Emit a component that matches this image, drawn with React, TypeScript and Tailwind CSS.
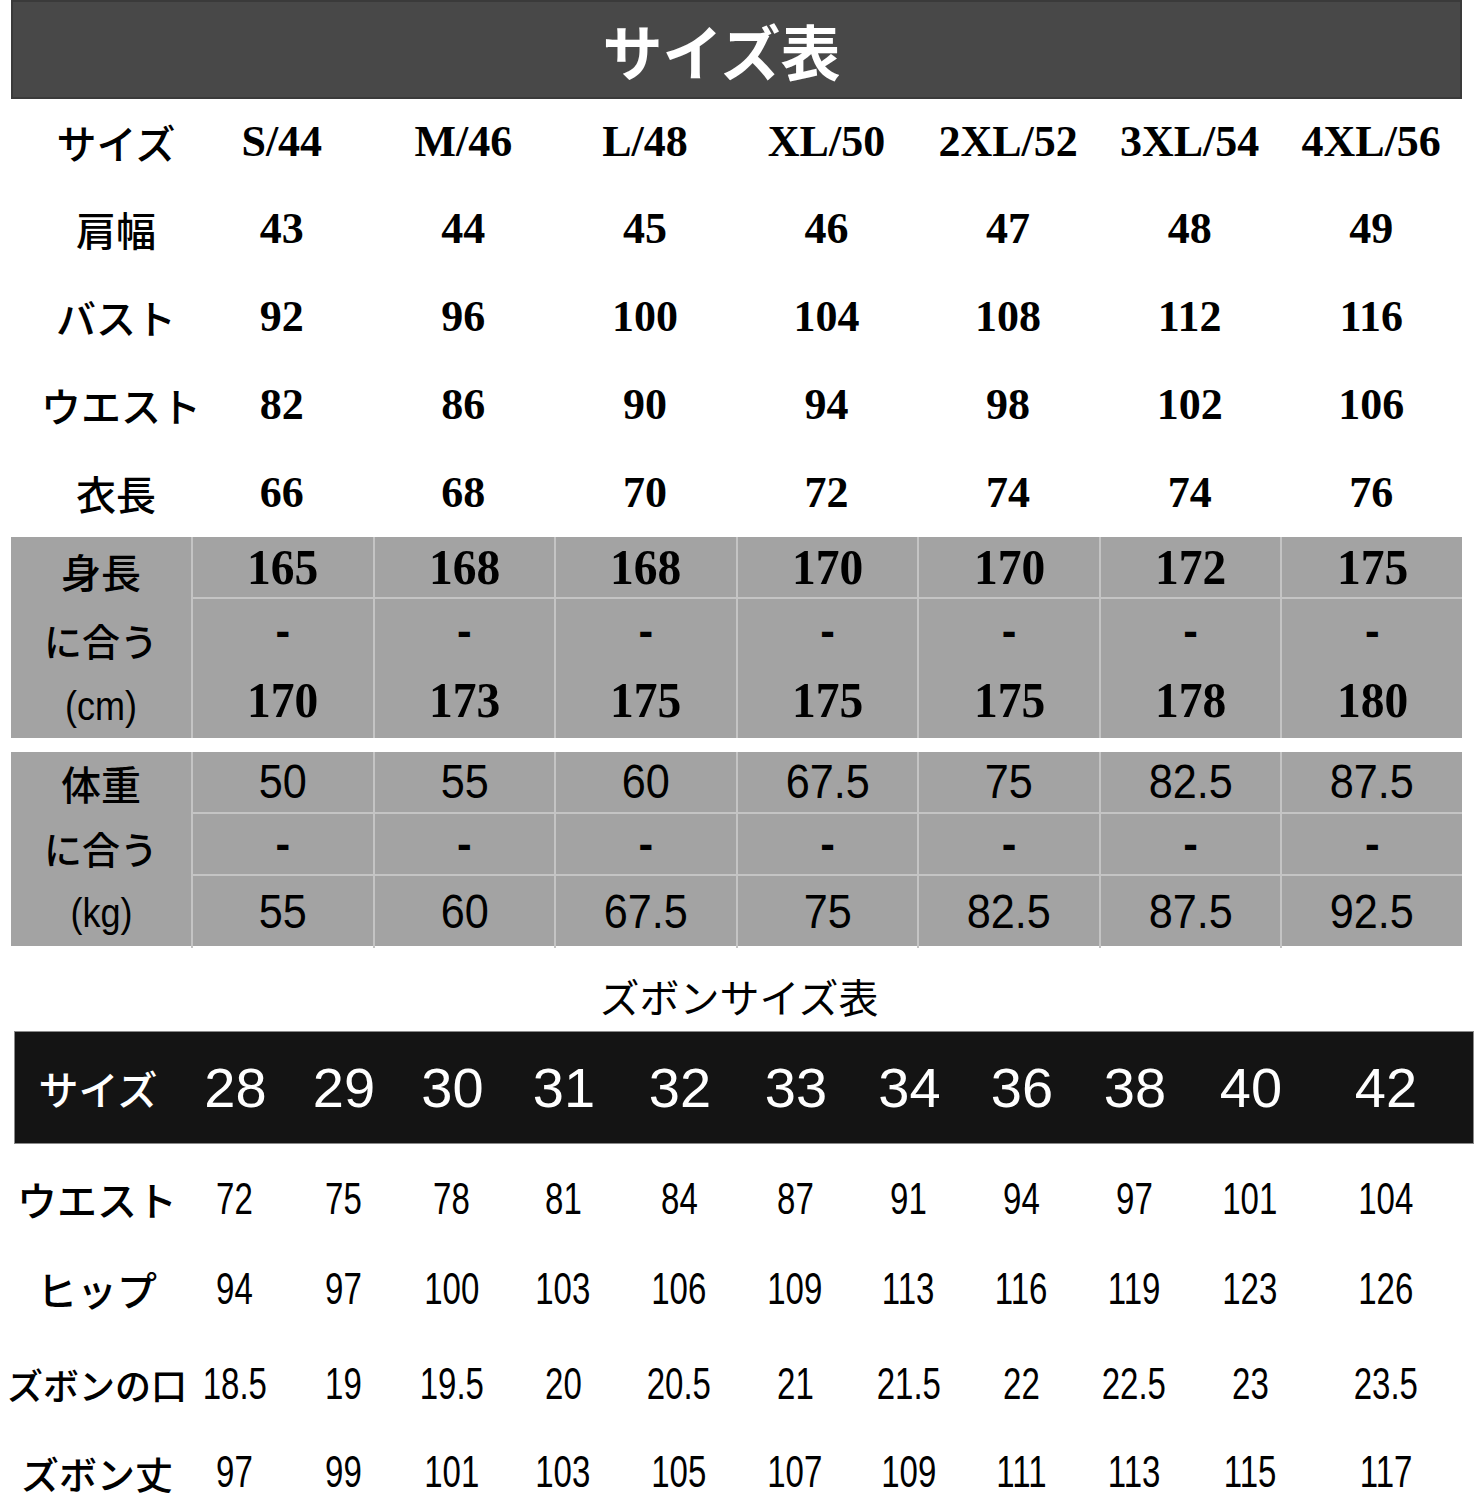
const jp = "font-['Noto_Sans_CJK_JP',sans-serif]";
const serif = "font-['Liberation_Serif','Noto_Sans_CJK_JP',serif]";
const sans = "font-['Liberation_Sans',sans-serif]";

const sizes = ['S/44', 'M/46', 'L/48', 'XL/50', '2XL/52', '3XL/54', '4XL/56'];

const topRows = [
  { label: '肩幅', values: ['43', '44', '45', '46', '47', '48', '49'] },
  { label: 'バスト', values: ['92', '96', '100', '104', '108', '112', '116'] },
  { label: 'ウエスト', values: ['82', '86', '90', '94', '98', '102', '106'] },
  { label: '衣長', values: ['66', '68', '70', '72', '74', '74', '76'] },
];

const height = [
  ['165', '170'],
  ['168', '173'],
  ['168', '175'],
  ['170', '175'],
  ['170', '175'],
  ['172', '178'],
  ['175', '180'],
];

const weight = [
  ['50', '55'],
  ['55', '60'],
  ['60', '67.5'],
  ['67.5', '75'],
  ['75', '82.5'],
  ['82.5', '87.5'],
  ['87.5', '92.5'],
];

const pantSizes = ['28', '29', '30', '31', '32', '33', '34', '36', '38', '40', '42'];

const pantRows = [
  { label: 'ウエスト', size: 'text-[40px]', h: 'mt-[10px] h-[90px]', values: ['72', '75', '78', '81', '84', '87', '91', '94', '97', '101', '104'] },
  { label: 'ヒップ', size: 'text-[40px]', h: 'h-[90px]', values: ['94', '97', '100', '103', '106', '109', '113', '116', '119', '123', '126'] },
  { label: 'ズボンの口', size: 'text-[36px]', h: 'h-[100px]', values: ['18.5', '19', '19.5', '20', '20.5', '21', '21.5', '22', '22.5', '23', '23.5'] },
  { label: 'ズボン丈', size: 'text-[38px]', h: 'h-[76px]', values: ['97', '99', '101', '103', '105', '107', '109', '111', '113', '115', '117'] },
];

const topGrid = 'grid grid-cols-[180px_repeat(7,1fr)]';
const pantGrid =
  'grid grid-cols-[166px_109px_108px_109px_114px_118px_114px_113px_112px_114px_118px_1fr] pr-[11px]';

function Dash() {
  return <span className={`${sans} text-[44px] font-bold`}>-</span>;
}

function TopTable() {
  return (
    <div className="ml-[11px] w-[1451px]">
      <div className="flex h-[99px] items-center justify-center border-2 border-[#3a3a3a] bg-[#484848] pr-[30px]">
        <h1 className={`${jp} text-[60px] font-bold text-white`}>サイズ表</h1>
      </div>

      <div className={`${topGrid} h-[86px] items-center`}>
        <div className={`${jp} pl-[30px] text-center text-[40px] font-medium text-black`}>サイズ</div>
        {sizes.map((s) => (
          <div key={s} className={`${serif} text-center text-[44px] font-bold text-black`}>
            {s}
          </div>
        ))}
      </div>

      {topRows.map((row) => (
        <div key={row.label} className={`${topGrid} h-[88px] items-center`}>
          <div className={`${jp} whitespace-nowrap pl-[30px] text-center text-[40px] font-medium text-black`}>
            {row.label}
          </div>
          {row.values.map((v, i) => (
            <div key={i} className={`${serif} text-center text-[44px] font-bold text-black`}>
              {v}
            </div>
          ))}
        </div>
      ))}

      {/* 身長 */}
      <div className={`${topGrid} h-[201px] bg-[#a3a3a3]`}>
        <div className={`${jp} flex flex-col items-center text-black`}>
          <div className="flex h-[68px] items-center text-[40px] font-medium">身長</div>
          <div className="flex h-[68px] items-center text-[38px] font-medium">に合う</div>
          <div className={`${sans} flex h-[65px] items-center text-[40px]`}>
            <span className="scale-x-90">(cm)</span>
          </div>
        </div>
        {height.map(([a, b], i) => (
          <div key={i} className={`${serif} flex flex-col border-l-2 border-[#c4c4c4] font-bold text-black`}>
            <div className="flex h-[62px] items-center justify-center border-b-2 border-[#c4c4c4] text-[50px]">
              <span className="scale-x-95">{a}</span>
            </div>
            <div className="flex h-[64px] items-center justify-center">
              <Dash />
            </div>
            <div className="flex flex-1 items-center justify-center text-[50px]">
              <span className="scale-x-95">{b}</span>
            </div>
          </div>
        ))}
      </div>

      <div className="h-[14px]" />

      {/* 体重 */}
      <div className={`${topGrid} h-[194px] bg-[#a3a3a3]`}>
        <div className={`${jp} flex flex-col items-center text-black`}>
          <div className="flex h-[62px] items-center text-[40px] font-medium">体重</div>
          <div className="flex h-[66px] items-center text-[38px] font-medium">に合う</div>
          <div className={`${sans} flex h-[66px] items-center text-[40px]`}>
            <span className="scale-x-90">(kg)</span>
          </div>
        </div>
        {weight.map(([a, b], i) => (
          <div key={i} className={`${sans} flex flex-col border-l-2 border-[#c4c4c4] text-black`}>
            <div className="flex h-[62px] items-center justify-center border-b-2 border-[#c4c4c4] text-[48px]">
              <span className="scale-x-90">{a}</span>
            </div>
            <div className="flex h-[62px] items-center justify-center border-b-2 border-[#c4c4c4]">
              <Dash />
            </div>
            <div className="flex flex-1 items-center justify-center text-[48px]">
              <span className="scale-x-90">{b}</span>
            </div>
          </div>
        ))}
      </div>
    </div>
  );
}

function PantsTable() {
  return (
    <div>
      <div className="flex h-[85px] items-center justify-center pt-[15px]">
        <h2 className={`${jp} text-[40px] text-black`}>ズボンサイズ表</h2>
      </div>

      <div className="ml-[14px] w-[1460px]">
        <div className={`${pantGrid} h-[113px] items-center border border-[#8a8a8a] bg-[#141414] text-white`}>
          <div className={`${jp} flex justify-center text-[40px] font-medium`}>サイズ</div>
          {pantSizes.map((s) => (
            <div key={s} className={`${sans} text-center text-[56px]`}>
              {s}
            </div>
          ))}
        </div>

        {pantRows.map((row) => (
          <div key={row.label} className={`${pantGrid} ${row.h} items-center text-black`}>
            <div className={`${jp} flex justify-center whitespace-nowrap font-medium ${row.size}`}>{row.label}</div>
            {row.values.map((v, i) => (
              <div key={i} className={`${sans} flex justify-center text-[44px]`}>
                <span className="scale-x-75">{v}</span>
              </div>
            ))}
          </div>
        ))}
      </div>
    </div>
  );
}

export default function App() {
  return (
    <div className="w-[1478px] bg-white">
      <TopTable />
      <PantsTable />
    </div>
  );
}
